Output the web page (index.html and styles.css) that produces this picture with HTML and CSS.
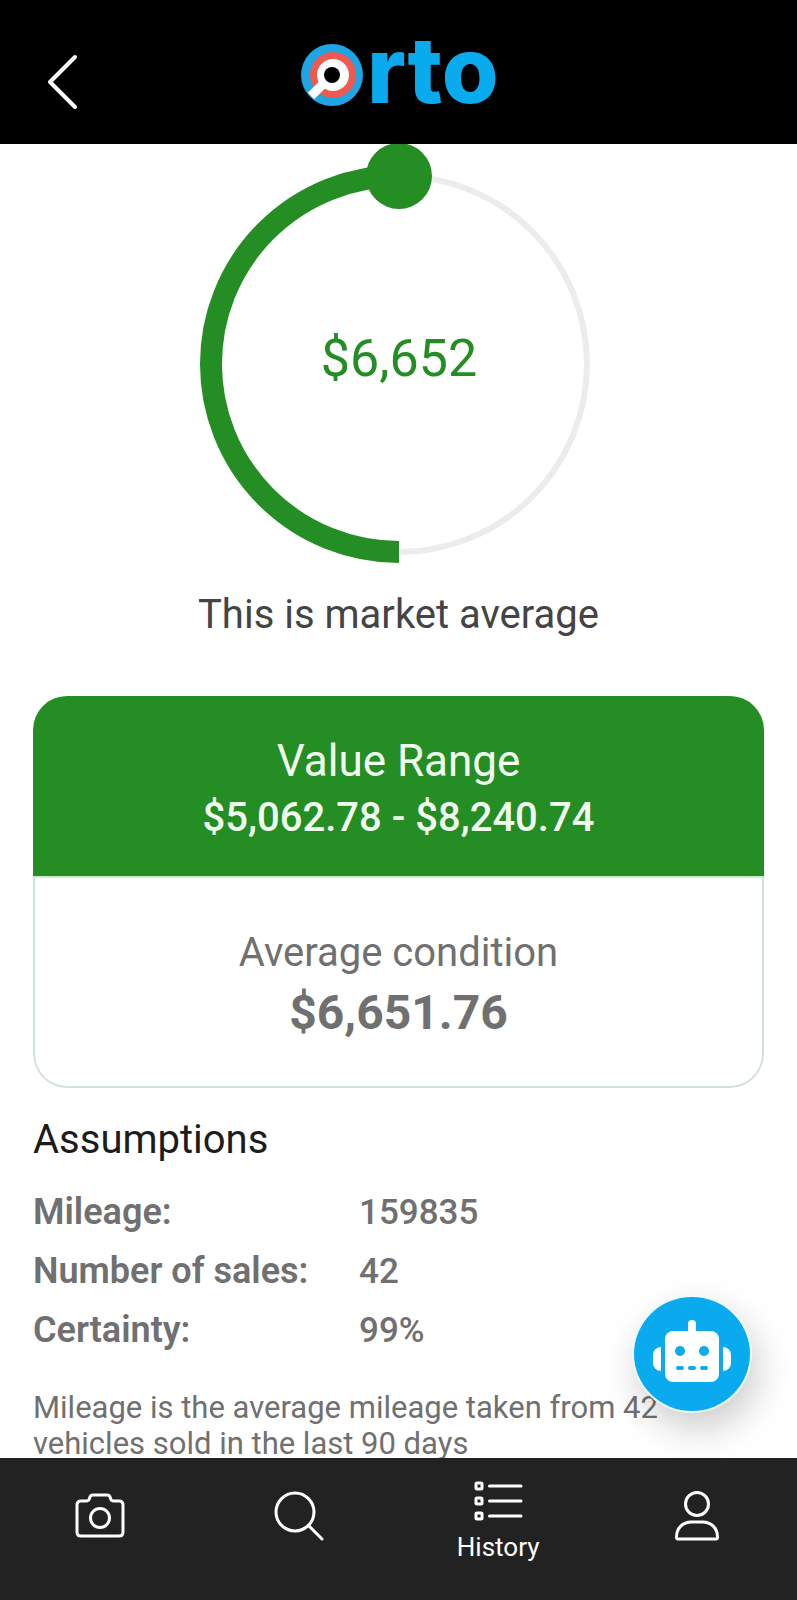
FILE: index.html
```html
<!DOCTYPE html>
<html lang="en">

<head>
    <meta charset="UTF-8">
    <meta name="viewport" content="width=device-width, initial-scale=1.0">
    <title>Orto</title>
    <link rel="stylesheet" href="styles.css">
</head>

<body>
    <header class="header">
        <button class="back" type="button" aria-label="Back">
            <svg width="34" height="60" viewBox="0 0 34 60">
                <path d="M29 5L4 30L29 55" />
            </svg>
        </button>
        <svg class="logo" width="200" height="124" viewBox="0 0 200 124" role="img" aria-label="Orto">
            <circle cx="33" cy="55" r="31" fill="#1fa4e4" />
            <circle cx="34" cy="55" r="23" fill="#ee5a50" />
            <path d="M29 59L12 76" stroke="#fff" stroke-width="9" />
            <circle cx="34" cy="55" r="16" fill="#fff" />
            <circle cx="33" cy="55" r="8" fill="#000" />
            <text class="logo-text" x="68" y="83">rto</text>
        </svg>
    </header>

    <main class="content">
        <section class="gauge">
            <svg width="444" height="420" viewBox="0 0 444 420">
                <path class="gauge-track" d="M222 32A188 188 0 0 1 222 408" />
                <path class="gauge-fill" d="M222 408A188 188 0 0 1 222 32" />
                <circle class="gauge-dot" cx="222" cy="32" r="33" />
                <text class="gauge-value" x="222" y="232">$6,652</text>
            </svg>
            <p class="gauge-label">This is market average</p>
        </section>

        <section class="card">
            <div class="card-top">
                <h2 class="card-title">Value Range</h2>
                <p class="card-range">$5,062.78 - $8,240.74</p>
            </div>
            <div class="card-bottom">
                <p class="card-condition">Average condition</p>
                <p class="card-price">$6,651.76</p>
            </div>
        </section>

        <section class="assumptions">
            <h2 class="assumptions-title">Assumptions</h2>
            <table class="facts">
                <tr>
                    <th scope="row">Mileage:</th>
                    <td>159835</td>
                </tr>
                <tr>
                    <th scope="row">Number of sales:</th>
                    <td>42</td>
                </tr>
                <tr>
                    <th scope="row">Certainty:</th>
                    <td>99%</td>
                </tr>
            </table>
            <p class="note">Mileage is the average mileage taken from 42 vehicles sold in the last 90 days</p>
        </section>
    </main>

    <button class="chat" type="button" aria-label="Chat">
        <svg width="80" height="70" viewBox="0 0 80 70">
            <rect x="36" y="1" width="8" height="20" rx="4" />
            <rect x="13" y="12" width="54" height="51" rx="8" />
            <path d="M9 28v24a8 8 0 0 1-8-8v-8a8 8 0 0 1 8-8z" />
            <path d="M71 28v24a8 8 0 0 0 8-8v-8a8 8 0 0 0-8-8z" />
            <g fill="#0aabee">
                <circle cx="28" cy="32" r="5" />
                <circle cx="52" cy="32" r="5" />
                <rect x="24" y="47" width="8" height="4" rx="2" />
                <rect x="36" y="47" width="8" height="4" rx="2" />
                <rect x="48" y="47" width="8" height="4" rx="2" />
            </g>
        </svg>
    </button>

    <nav class="tabs">
        <a class="tab" href="#camera" aria-label="Camera">
            <svg width="50" height="50" viewBox="0 0 50 50">
                <path d="M6 10H11Q14 10 14.500 7.500L15 6Q15.500 4 18 4H32Q34.500 4 35 6L35.500 7.500Q36 10 39 10H44Q48 10 48 14V41Q48 45 44 45H6Q2 45 2 41V14Q2 10 6 10Z" />
                <circle cx="25" cy="27" r="9.500" />
            </svg>
        </a>
        <a class="tab" href="#search" aria-label="Search">
            <svg width="50" height="50" viewBox="0 0 50 50">
                <circle cx="21" cy="21" r="19" />
                <path d="M34.500 34.500L48 48" />
            </svg>
        </a>
        <a class="tab" href="#history">
            <svg width="50" height="42" viewBox="0 0 50 42">
                <rect x="3" y="3" width="6" height="6" rx="1" />
                <rect x="3" y="18" width="6" height="6" rx="1" />
                <rect x="3" y="33" width="6" height="6" rx="1" />
                <path d="M16.500 6H48M16.500 21H48M16.500 36H48" />
            </svg>
            <span class="tab-label">History</span>
        </a>
        <a class="tab" href="#account" aria-label="Account">
            <svg width="50" height="50" viewBox="0 0 50 50">
                <circle cx="25" cy="13" r="11.500" />
                <path d="M6 48Q4.500 48 4.500 46C4.500 37 11 31 19 31H31C39 31 45.500 37 45.500 46Q45.500 48 44 48Z" />
            </svg>
        </a>
    </nav>
</body>

</html>
```

FILE: styles.css
```css
* {
    box-sizing: border-box;
}

body {
    margin: 0;
    height: 100vh;
    display: flex;
    flex-direction: column;
    background-color: #fff;
    font-family: Roboto, "Liberation Sans", sans-serif;
    color: #707070;
}

h2,
p {
    margin: 0;
    font-weight: 400;
}

button {
    padding: 0;
    border: 0;
    background: none;
    cursor: pointer;
}

svg {
    display: block;
}

/* Header */
.header {
    flex: none;
    display: grid;
    grid-template-columns: 1fr auto 1fr;
    align-items: center;
    padding-top: 20px;
    background-color: #000;
}

.back {
    justify-self: start;
    margin-left: 46px;
}

.back path {
    fill: none;
    stroke: #fff;
    stroke-width: 4;
    stroke-linecap: round;
    stroke-linejoin: round;
}

.logo {
    overflow: visible;
}

.logo-text {
    font-family: Inter, sans-serif;
    font-size: 92px;
    font-weight: 800;
    fill: #0aabee;
}

/* Page content */
.content {
    flex: 1;
    min-height: 0;
    overflow: hidden;
    padding: 0 33px;
}

.gauge {
    display: flex;
    flex-direction: column;
    align-items: center;
    text-align: center;
}

.gauge-track,
.gauge-fill {
    fill: none;
    stroke: #ececec;
    stroke-width: 6;
}

.gauge-fill {
    stroke: #248d24;
    stroke-width: 22;
}

.gauge-dot {
    fill: #248d24;
}

.gauge-value {
    font-size: 52px;
    text-anchor: middle;
    fill: #248d24;
}

.gauge-label {
    margin: 26px 0 56px;
    font-size: 40px;
    line-height: 50px;
    color: #444;
}

.card {
    overflow: hidden;
    border-radius: 34px;
    text-align: center;
}

.card-top {
    padding: 37px 0 29px;
    background-color: #248d24;
    color: #f2fff0;
}

.card-title {
    font-size: 44px;
    line-height: 56px;
}

.card-range {
    font-size: 40px;
    font-weight: 500;
    line-height: 58px;
}

.card-bottom {
    padding: 45px 0 43px;
    border: 2px solid #d3dfdd;
    border-radius: 0 0 34px 34px;
    border-top-color: #c9efc8;
}

.card-condition {
    font-size: 40px;
    line-height: 60px;
}

.card-price {
    font-size: 48px;
    font-weight: 700;
    line-height: 60px;
}

.assumptions-title {
    margin: 27px 0 18px;
    font-size: 40px;
    line-height: 50px;
    color: #1c1c1c;
}

.facts {
    width: 100%;
    border-collapse: collapse;
    font-size: 36px;
    line-height: 59px;
}

.facts th,
.facts td {
    padding: 0;
    text-align: left;
}

.facts th {
    width: 326px;
    font-weight: 600;
}

.facts td {
    font-size: 35px;
    font-weight: 500;
}

.note {
    margin-top: 30px;
    padding-right: 80px;
    font-size: 31px;
    line-height: 36px;
}

/* Chat button */
.chat {
    position: fixed;
    right: 45px;
    bottom: 187px;
    width: 120px;
    height: 118px;
    display: grid;
    place-items: center;
    border: 2px solid #effaff;
    border-radius: 50%;
    background-color: #0aabee;
    box-shadow: 6px 16px 36px rgba(0, 0, 0, 0.2);
}

.chat svg {
    fill: #fff;
}

/* Bottom tabs */
.tabs {
    flex: none;
    display: grid;
    grid-template-columns: repeat(4, 1fr);
    height: 142px;
    padding-bottom: 26px;
    background-color: #222;
}

.tab {
    display: flex;
    flex-direction: column;
    align-items: center;
    justify-content: center;
    gap: 12px;
    font-size: 26px;
    line-height: 26px;
    color: #fff;
    text-decoration: none;
}

.tab-label {
    margin-bottom: -8px;
}

.tab svg {
    fill: none;
    stroke: #fff;
    stroke-width: 3;
    stroke-linecap: round;
    stroke-linejoin: round;
}
```
